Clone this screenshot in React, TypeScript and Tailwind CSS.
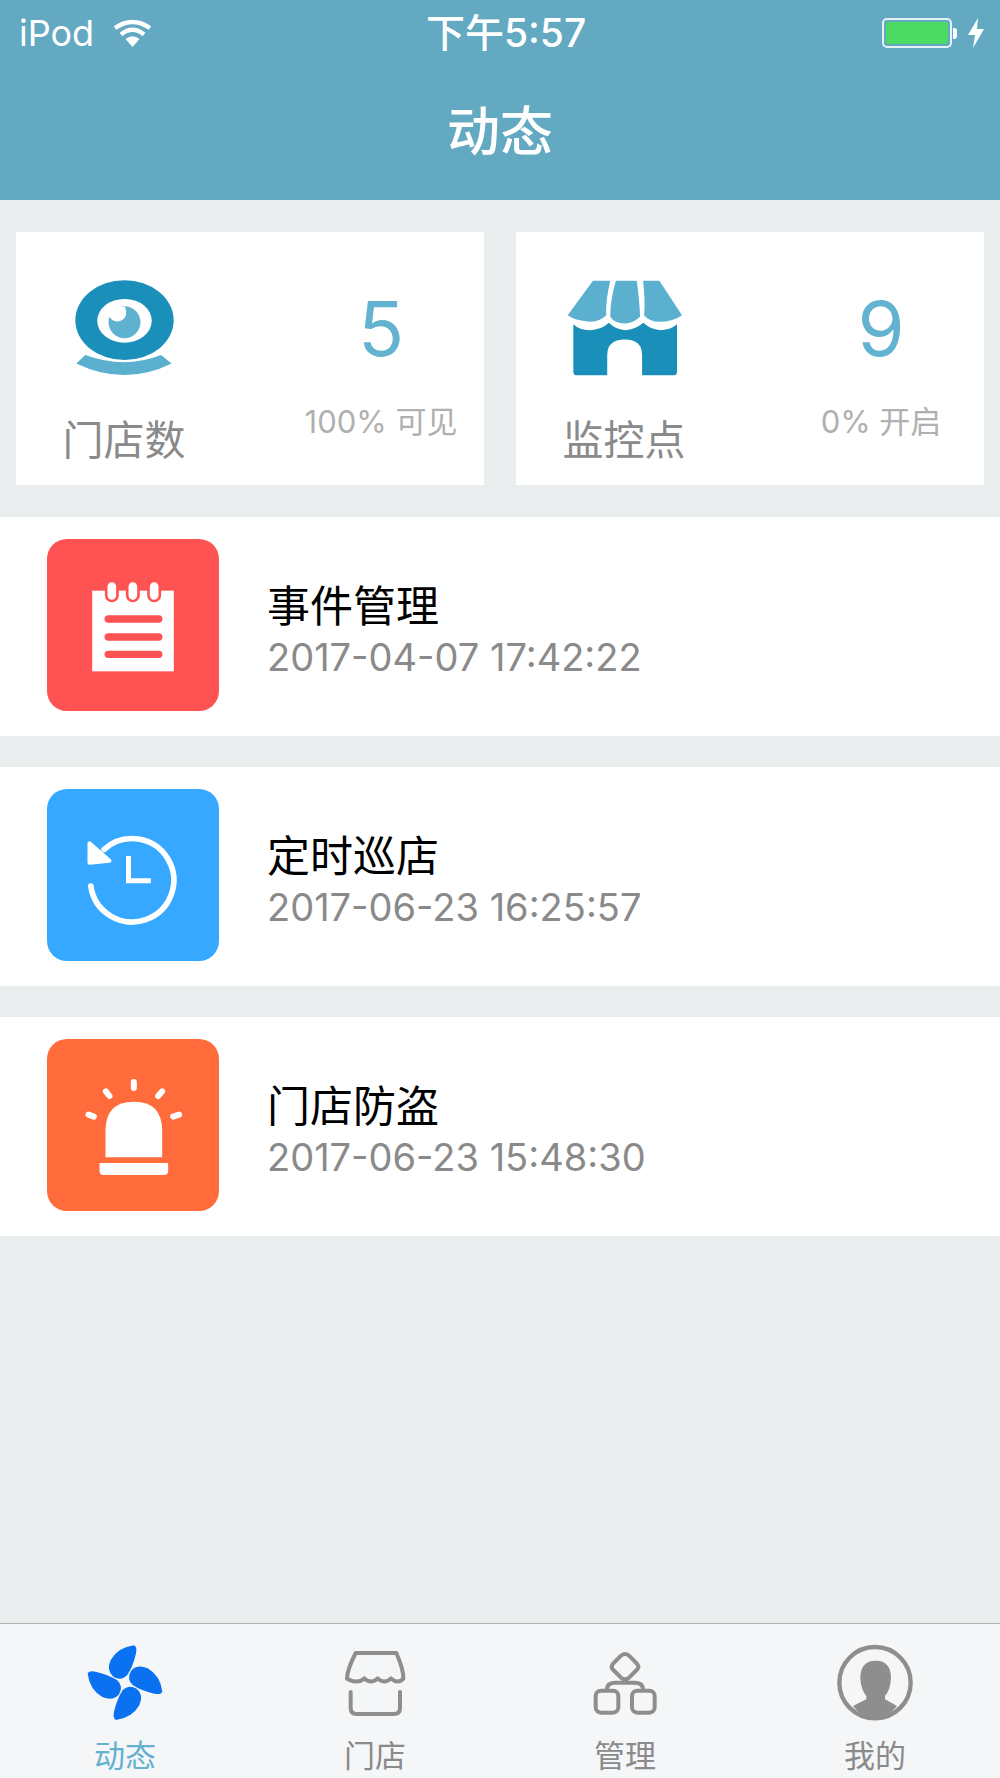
import React from "react";

const CJK = "font-['Inter','Noto_Sans_CJK_SC',sans-serif]";

const CameraIcon = () => (
  <svg className="block w-[107px] h-[103px]" viewBox="220 170 320 310">
    <ellipse cx="380" cy="300" rx="148" ry="120" fill="#1a8fb9" />
    <ellipse cx="380" cy="302" rx="82" ry="66" fill="#fff" />
    <circle cx="380" cy="306" r="48" fill="#5eb2d0" />
    <path d="M332 284 Q345 312 372 300 Q392 288 382 260 Q350 252 332 284Z" fill="#fff" />
    <path d="M262 405 Q380 448 490 405 L522 430 Q380 500 235 430Z" fill="#5bb0cf" />
  </svg>
);

const ShopIcon = () => (
  <svg className="block w-[123px] h-[103px]" viewBox="190 170 370 310">
    <path d="M280 181 H332 Q318 240 320 285 Q300 305 270 305 Q225 300 204 285Z" fill="#5bb0cf" />
    <path d="M349 181 H412 Q420 240 422 290 Q400 310 376 310 Q345 310 332 290 Q332 240 349 181Z" fill="#5bb0cf" />
    <path d="M431 181 H480 L548 285 Q520 305 480 305 Q450 305 434 285 Q438 240 431 181Z" fill="#5bb0cf" />
    <path
      d="M221 312 Q240 330 270 330 Q305 330 328 308 Q350 330 378 330 Q405 330 432 308 Q455 330 485 330 Q515 328 533 312 V455 Q533 466 522 466 H428 V405 Q428 358 376 358 Q323 358 323 405 V466 H232 Q221 466 221 455Z"
      fill="#1a8fb9"
    />
  </svg>
);

const NoteIcon = () => (
  <svg className="block w-full h-full" viewBox="52 55 513 516">
    <rect x="186" y="210" width="245" height="242" fill="#fff" />
    {[245, 308, 372].map((x) => (
      <rect key={x} x={x - 17} y="181" width="34" height="60" rx="17" fill="#fff" stroke="#ff5252" strokeWidth="8" />
    ))}
    {[284, 338, 390].map((y) => (
      <rect key={y} x="223" y={y} width="174" height="22" rx="11" fill="#ff5252" />
    ))}
  </svg>
);

const ClockIcon = () => (
  <svg className="block w-full h-full" viewBox="52 55 513 516" fill="none" stroke="#fff" strokeLinecap="round">
    <path d="M222 236 A125 125 0 1 1 182 346" strokeWidth="17" />
    <path d="M178 218 V276 L238 270Z" fill="#fff" strokeWidth="12" strokeLinejoin="round" />
    <path d="M295 256 V330 H362" strokeWidth="15" strokeLinecap="butt" />
  </svg>
);

const AlarmIcon = () => (
  <svg className="block w-full h-full" viewBox="52 55 513 516">
    <path d="M226 410 V330 Q226 243 311 243 Q396 243 396 330 V410Z" fill="#fff" />
    <path d="M208 427 H414 V450 Q414 463 401 463 H221 Q208 463 208 450Z" fill="#fff" />
    <g stroke="#fff" strokeWidth="18" strokeLinecap="round">
      <path d="M311 184 V202" />
      <path d="M227 212 L238 226" />
      <path d="M396 212 L384 226" />
      <path d="M175 282 L191 288" />
      <path d="M447 282 L429 288" />
    </g>
  </svg>
);

const FanIcon = () => (
  <svg className="block w-[78px] h-[78px]" viewBox="254 102 234 234">
    {[0, 90, 180, 270].map((r) => (
      <path
        key={r}
        transform={`rotate(${r} 371 218)`}
        d="M398 106 Q408 110 404 130 Q395 170 378 195 Q360 214 336 200 Q314 182 328 150 Q350 112 398 106Z"
        fill="#0a72f0"
      />
    ))}
  </svg>
);

const ShopTabIcon = () => (
  <svg className="block w-[78px] h-[78px]" viewBox="1003 102 234 234" fill="none" stroke="#8e8e8e" strokeWidth="12" strokeLinejoin="round" strokeLinecap="round">
    <path d="M1062 129 H1184 Q1206 180 1205 206 Q1188 224 1168 205 Q1148 224 1128 205 Q1108 224 1088 205 Q1068 224 1036 206 Q1036 180 1062 129Z" />
    <path d="M1047 246 V294 Q1047 312 1065 312 H1177 Q1195 312 1195 294 V246" />
  </svg>
);

const ManageTabIcon = () => (
  <svg className="block w-[78px] h-[78px]" viewBox="256 102 234 234" fill="none" stroke="#8e8e8e" strokeWidth="12" strokeLinejoin="round">
    <path d="M361 137 Q373 127 385 137 L408 160 Q418 170 408 180 L385 203 Q373 213 361 203 L338 180 Q328 170 338 160Z" />
    <rect x="285" y="242" width="68" height="66" rx="16" />
    <rect x="394" y="242" width="68" height="66" rx="16" />
    <path d="M318 242 Q318 218 342 218 H404 Q428 218 428 242" />
  </svg>
);

const PersonTabIcon = () => (
  <svg className="block w-[78px] h-[78px]" viewBox="1005 102 234 234">
    <circle cx="1122" cy="218" r="107" fill="none" stroke="#8e8e8e" strokeWidth="13" />
    <path
      d="M1124 152 Q1170 152 1170 205 Q1168 240 1152 258 V268 Q1170 278 1188 288 Q1160 326 1122 326 Q1084 326 1056 288 Q1076 278 1096 268 V258 Q1080 240 1078 205 Q1078 152 1124 152Z"
      fill="#8e8e8e"
    />
  </svg>
);

const WifiIcon = () => (
  <svg className="block w-[39px] h-[28px]" viewBox="0 0 39 28" fill="none" stroke="#fff" strokeWidth="4.4">
    <path d="M2 9 Q19.5 -3 37 9" />
    <path d="M8 15.5 Q19.5 6 31 15.5" />
    <path d="M19.5 28 L12.5 20 Q19.5 14.5 26.5 20Z" fill="#fff" stroke="none" />
  </svg>
);

const StatCard = ({ icon, label, value, note }: { icon: React.ReactNode; label: string; value: string; note: string }) => (
  <div className="flex flex-1 h-[253px] bg-white">
    <div className="flex flex-col items-center w-[216px] pt-[45px]">
      <div className="h-[103px]">{icon}</div>
      <div className="mt-[35px] text-[41px] leading-[50px] text-[#8a8a8a]">{label}</div>
    </div>
    <div className="flex flex-col items-center w-[204px] ml-[47px] pt-[52px]">
      <div className="text-[76px] leading-[88px] font-normal text-[#63b2d0]">{value}</div>
      <div className="mt-[30px] text-[31px] leading-[40px] text-[#b0b0b0] whitespace-nowrap">{note}</div>
    </div>
  </div>
);

const EventRow = ({ color, icon, title, time }: { color: string; icon: React.ReactNode; title: string; time: string }) => (
  <div className="flex items-start h-[219px] pl-[47px] pt-[22px] bg-white">
    <div className={`w-[172px] h-[172px] rounded-[20px] ${color}`}>{icon}</div>
    <div className="ml-[48px] pt-[41px]">
      <div className="text-[43px] leading-[52px] text-black">{title}</div>
      <div className="mt-[3px] text-[38px] leading-[44px] text-[#8a8a8a]">{time}</div>
    </div>
  </div>
);

const TabItem = ({ icon, label, active }: { icon: React.ReactNode; label: string; active?: boolean }) => (
  <div className="flex flex-col items-center flex-1">
    {icon}
    <div className={`mt-[16px] text-[31px] leading-[36px] ${active ? "text-[#63b2d0]" : "text-[#8a8a8a]"}`}>{label}</div>
  </div>
);

export default function App() {
  return (
    <div className={`flex flex-col w-[1000px] h-[1778px] bg-[#e9edee] ${CJK}`}>
      <header className="h-[200px] bg-[#64a9c2] text-white">
        <div className="flex items-center h-[66px] pl-[19px] pr-[15px]">
          <span className="text-[36px] leading-[44px]">iPod</span>
          <span className="ml-[19px]"><WifiIcon /></span>
          <span className="flex-1 text-center text-[39px] leading-[44px] font-medium pr-[22px]">下午5:57</span>
          <div className="flex items-center">
            <div className="w-[70px] h-[30px] p-[2px] rounded-[5px] border-2 border-[#e6f2f6]">
              <div className="h-full rounded-[2px] bg-[#4cd964]" />
            </div>
            <div className="w-[4px] h-[11px] ml-[1px] rounded-r-[3px] bg-white" />
            <svg className="block w-[18px] h-[30px] ml-[10px]" viewBox="0 0 18 30">
              <path d="M11 0 L1 17 H8 L6 30 L17 11 H10Z" fill="#fff" />
            </svg>
          </div>
        </div>
        <div className="h-[134px] pt-[24px] text-center text-[53px] leading-[84px] font-medium">动态</div>
      </header>

      <div className="flex gap-[32px] px-[16px] py-[32px]">
        <StatCard icon={<CameraIcon />} label="门店数" value="5" note="100% 可见" />
        <StatCard icon={<ShopIcon />} label="监控点" value="9" note="0% 开启" />
      </div>

      <div className="flex flex-col gap-[31px]">
        <EventRow color="bg-[#ff5252]" icon={<NoteIcon />} title="事件管理" time="2017-04-07 17:42:22" />
        <EventRow color="bg-[#36a8ff]" icon={<ClockIcon />} title="定时巡店" time="2017-06-23 16:25:57" />
        <EventRow color="bg-[#ff6b3b]" icon={<AlarmIcon />} title="门店防盗" time="2017-06-23 15:48:30" />
      </div>

      <nav className="flex mt-auto h-[155px] pt-[20px] bg-[#f5f6f7] border-t border-[#b2b2b2]">
        <TabItem icon={<FanIcon />} label="动态" active />
        <TabItem icon={<ShopTabIcon />} label="门店" />
        <TabItem icon={<ManageTabIcon />} label="管理" />
        <TabItem icon={<PersonTabIcon />} label="我的" />
      </nav>
    </div>
  );
}
